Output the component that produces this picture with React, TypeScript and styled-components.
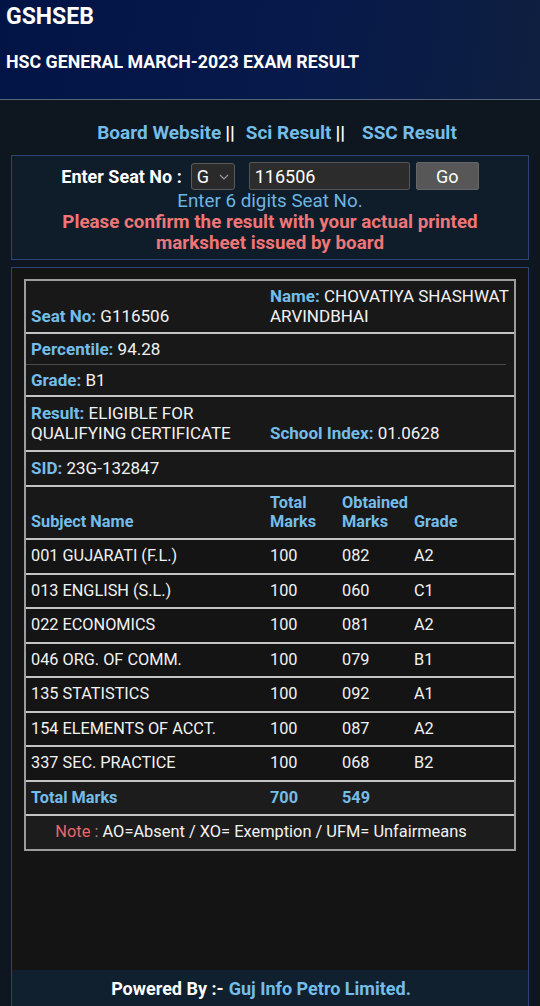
import styled, { createGlobalStyle } from "styled-components";

const GlobalStyle = createGlobalStyle`
  html, body {
    margin: 0;
    padding: 0;
    background: #0e161f;
    font-family: Roboto, "Liberation Sans", Arial, sans-serif;
  }
  * { box-sizing: border-box; }
`;

const Page = styled.div`
  min-height: 1006px;
  display: flex;
  flex-direction: column;
`;

const Header = styled.header`
  height: 100px;
  padding: 4px 6px 0;
  background: linear-gradient(100deg, #021446 0%, #06194a 55%, #0e1f3f 100%);
  border-bottom: 1px solid #56657c;
  color: #fff;
`;

const Brand = styled.div`
  font-size: 23px;
  font-weight: 700;
  line-height: 26px;
`;

const ExamTitle = styled.h1`
  margin: 21px 0 0;
  font-size: 17.8px;
  font-weight: 700;
  line-height: 22px;
`;

const Body = styled.main`
  flex: 1;
  display: flex;
  flex-direction: column;
  padding: 0 11px;
`;

const LinksRow = styled.nav`
  height: 55px;
  display: flex;
  justify-content: center;
  align-items: flex-end;
  padding: 0 0 11px 18px;
  font-size: 19px;
  font-weight: 700;
  color: #fff;
`;

const NavLink = styled.a<{ $gap?: number }>`
  color: #74bde9;
  text-decoration: none;
  margin: 0 4px 0 ${(p) => p.$gap ?? 0}px;
`;

const SearchPanel = styled.section`
  background: #0f1c2a;
  border: 1px solid #2b4572;
  padding: 6px 4px 5px;
  text-align: center;
`;

const SearchRow = styled.div`
  display: flex;
  justify-content: center;
  align-items: center;
  height: 28px;
`;

const SeatLabel = styled.label`
  color: #fff;
  font-size: 18px;
  font-weight: 700;
  margin-right: 9px;
`;

const SelectBox = styled.div`
  position: relative;
  width: 44px;
  height: 27px;
  margin-right: 14px;
`;

const Select = styled.select`
  appearance: none;
  width: 100%;
  height: 100%;
  background: #2a2a2a;
  border: 1px solid #5a5a5a;
  border-radius: 3px;
  color: #fff;
  font-family: inherit;
  font-size: 18px;
  padding: 0 0 0 5px;
`;

const Chevron = styled.svg`
  position: absolute;
  right: 6px;
  top: 11px;
  pointer-events: none;
`;

const SeatInput = styled.input`
  width: 161px;
  height: 28px;
  background: #2c2c2c;
  border: 1px solid #555;
  border-radius: 2px;
  color: #fff;
  font-family: inherit;
  font-size: 18px;
  padding: 0 5px;
  margin-right: 6px;
  outline: none;
`;

const GoButton = styled.button`
  width: 63px;
  height: 28px;
  background: #575757;
  border: 1px solid #666;
  border-radius: 2px;
  color: #fff;
  font-family: inherit;
  font-size: 18px;
`;

const Hint = styled.div`
  color: #6db5e0;
  font-size: 18.8px;
  line-height: 22px;
`;

const Warning = styled.div`
  color: #ef7676;
  font-size: 18.8px;
  font-weight: 700;
  line-height: 21px;
`;

const ResultPanel = styled.section`
  flex: 1;
  margin-top: 7px;
  background: #141414;
  border: 1px solid #2b4572;
  border-bottom: none;
  padding: 11px 12px;
`;

const Table = styled.div`
  border: 2px solid #9c9c9c;
  background: #181818;
  color: #f2f2f2;
  font-size: 16.3px;
  line-height: 20px;
`;

const Row = styled.div<{ $cols?: string; $bg?: string; $center?: boolean; $pad?: string; $size?: string }>`
  display: grid;
  grid-template-columns: ${(p) => p.$cols || "239px 1fr"};
  align-items: end;
  padding: ${(p) => p.$pad || "6px 0 6.5px"};
  background: ${(p) => p.$bg || "transparent"};
  border-bottom: 2px solid #c4c4c4;
  font-size: ${(p) => p.$size || "inherit"};
  text-align: ${(p) => (p.$center ? "center" : "left")};
  &:last-child { border-bottom: none; }
`;

const SubjectGrid = "239px 72px 72px 1fr";

const Cell = styled.div`
  padding-left: 5px;
`;

const SplitRow = styled.div`
  border-bottom: 2px solid #c4c4c4;
  font-size: 17px;
`;

const SubRow = styled.div<{ $line?: boolean }>`
  padding: 5px 5px 5px;
  margin: 0 ${(p) => (p.$line ? "8px" : "0")} 0 0;
  border-bottom: ${(p) => (p.$line ? "1px solid #4a4a4a" : "none")};
`;

const Label = styled.span`
  color: #74bde9;
  font-weight: 700;
`;

const Head = styled.div`
  padding-left: 5px;
  color: #74bde9;
  font-weight: 700;
  line-height: 19px;
`;

const Total = styled.span`
  color: #74bde9;
  font-weight: 700;
`;

const NoteWord = styled.span`
  color: #e8666d;
`;

const NoteColon = styled.span`
  color: #9a9a9a;
`;

const Footer = styled.footer`
  margin: 0 11px;
  height: 36px;
  display: flex;
  align-items: center;
  justify-content: center;
  padding-right: 18px;
  background: #10202f;
  border-left: 1px solid #2b4572;
  border-right: 1px solid #2b4572;
  font-size: 18px;
  font-weight: 700;
  color: #fff;
`;

const FooterLink = styled.span`
  color: #74bde9;
  margin-left: 5px;
`;

const subjects = [
  ["001 GUJARATI (F.L.)", "100", "082", "A2"],
  ["013 ENGLISH (S.L.)", "100", "060", "C1"],
  ["022 ECONOMICS", "100", "081", "A2"],
  ["046 ORG. OF COMM.", "100", "079", "B1"],
  ["135 STATISTICS", "100", "092", "A1"],
  ["154 ELEMENTS OF ACCT.", "100", "087", "A2"],
  ["337 SEC. PRACTICE", "100", "068", "B2"],
];

export default function App() {
  return (
    <>
      <GlobalStyle />
      <Page>
        <Header>
          <Brand>GSHSEB</Brand>
          <ExamTitle>HSC GENERAL MARCH-2023 EXAM RESULT</ExamTitle>
        </Header>

        <Body>
          <LinksRow>
            <NavLink href="#">Board Website</NavLink>||
            <NavLink $gap={11} href="#">Sci Result</NavLink>||
            <NavLink $gap={17} href="#">SSC Result</NavLink>
          </LinksRow>

          <SearchPanel>
            <SearchRow>
              <SeatLabel>Enter Seat No :</SeatLabel>
              <SelectBox>
                <Select defaultValue="G">
                  <option value="G">G</option>
                </Select>
                <Chevron width="10" height="6" viewBox="0 0 10 6">
                  <path d="M1 1l4 4 4-4" fill="none" stroke="#9a9a9a" strokeWidth="1.2" />
                </Chevron>
              </SelectBox>
              <SeatInput defaultValue="116506" />
              <GoButton>Go</GoButton>
            </SearchRow>
            <Hint>Enter 6 digits Seat No.</Hint>
            <Warning>
              Please confirm the result with your actual printed
              <br />
              marksheet issued by board
            </Warning>
          </SearchPanel>

          <ResultPanel>
            <Table>
              <Row $size="17px" $pad="5px 0 6px">
                <Cell><Label>Seat No:</Label> G116506</Cell>
                <Cell><Label>Name:</Label> CHOVATIYA SHASHWAT ARVINDBHAI</Cell>
              </Row>
              <SplitRow>
                <SubRow $line><Label>Percentile:</Label> 94.28</SubRow>
                <SubRow><Label>Grade:</Label> B1</SubRow>
              </SplitRow>
              <Row $size="17px" $pad="6px 0 7px">
                <Cell><Label>Result:</Label> ELIGIBLE FOR QUALIFYING CERTIFICATE</Cell>
                <Cell><Label>School Index:</Label> 01.0628</Cell>
              </Row>
              <Row $size="17px" $pad="6px 0 7px">
                <Cell><Label>SID:</Label> 23G-132847</Cell>
              </Row>
              <Row $cols={SubjectGrid} $pad="6px 0 7px">
                <Head>Subject Name</Head>
                <Head>Total Marks</Head>
                <Head>Obtained Marks</Head>
                <Head>Grade</Head>
              </Row>
              {subjects.map((s) => (
                <Row key={s[0]} $cols={SubjectGrid} $bg="#141414">
                  {s.map((v, i) => (
                    <Cell key={i}>{v}</Cell>
                  ))}
                </Row>
              ))}
              <Row $cols={SubjectGrid} $bg="#1c1c1c">
                <Cell><Total>Total Marks</Total></Cell>
                <Cell><Total>700</Total></Cell>
                <Cell><Total>549</Total></Cell>
                <Cell />
              </Row>
              <Row $cols="1fr" $bg="#1c1c1c" $center $size="16.4px" $pad="6px 18px 6.5px 0">
                <div>
                  <NoteWord>Note</NoteWord> <NoteColon>:</NoteColon> AO=Absent / XO= Exemption / UFM= Unfairmeans
                </div>
              </Row>
            </Table>
          </ResultPanel>
        </Body>

        <Footer>
          Powered By :-<FooterLink>Guj Info Petro Limited.</FooterLink>
        </Footer>
      </Page>
    </>
  );
}
